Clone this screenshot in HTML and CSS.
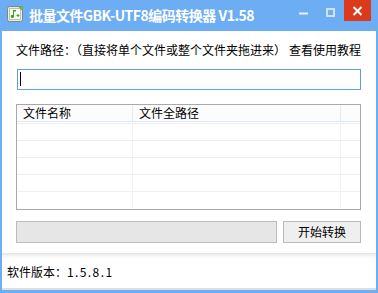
FILE: index.html
```html
<!DOCTYPE html>
<html lang="zh-CN">
<head>
<meta charset="utf-8">
<title>批量文件GBK-UTF8编码转换器 V1.58</title>
<link rel="stylesheet" href="styles.css">
</head>
<body>
<div class="window">
  <div class="titlebar">
    <svg class="app-icon" width="16" height="16" viewBox="0 0 16 16">
      <rect x="0.5" y="0.5" width="15" height="15" rx="2" fill="#e9ece6" stroke="#7d8a78"/>
      <rect x="2.5" y="2.5" width="11" height="11" fill="#f7f9f4" stroke="#b9c2b3"/>
      <path d="M7 4v6.5a1.6 1.6 0 1 1-1-1.5V4h3v1.5H7" fill="#4a9a2a"/>
      <path d="M9.5 9.5h3M11 8v3" stroke="#5aa83a" stroke-width="1.2"/>
      <path d="M12 0.5l3.5 3.5M13.5 0.5h2v2" stroke="#5fb241" stroke-width="1.3" fill="none"/>
    </svg>
    <span class="title">批量文件GBK-UTF8编码转换器 V1.58</span>
    <div class="controls">
      <svg class="ctl-min" width="9" height="21" viewBox="0 0 9 21"><rect x="0" y="12.5" width="9" height="2" fill="#e8f1fc"/></svg>
      <svg class="ctl-max" width="9" height="21" viewBox="0 0 9 21"><rect x="1" y="9" width="7" height="7" fill="none" stroke="#cfe2fa" stroke-width="2"/></svg>
      <svg class="ctl-close" width="27" height="21" viewBox="0 0 27 21"><rect width="27" height="21" fill="#db3a1b"/><path d="M9.5 7l8 8M17.5 7l-8 8" stroke="#ffffff" stroke-width="2"/></svg>
    </div>
  </div>
  <div class="client">
    <div class="main">
      <div class="label-row">
        <span>文件路径：（直接将单个文件或整个文件夹拖进来）</span>
        <span>查看使用教程</span>
      </div>
      <div class="path-input"><span class="caret"></span></div>
      <div class="table">
        <div class="thead">
          <div class="cell c1">文件名称</div>
          <div class="cell c2">文件全路径</div>
          <div class="cell c3"></div>
        </div>
        <div class="tbody">
          <div class="row"><div class="cell c1"></div><div class="cell c2"></div><div class="cell c3"></div></div>
          <div class="row"><div class="cell c1"></div><div class="cell c2"></div><div class="cell c3"></div></div>
          <div class="row"><div class="cell c1"></div><div class="cell c2"></div><div class="cell c3"></div></div>
          <div class="row"><div class="cell c1"></div><div class="cell c2"></div><div class="cell c3"></div></div>
          <div class="row"><div class="cell c1"></div><div class="cell c2"></div><div class="cell c3"></div></div>
        </div>
      </div>
      <div class="action-row">
        <div class="progress"></div>
        <button class="btn">开始转换</button>
      </div>
    </div>
    <div class="status">软件版本：<span class="ver">1.5.8.1</span></div>
  </div>
</div>
</body>
</html>
```

FILE: styles.css
```css
* { box-sizing: border-box; }
html, body { margin: 0; padding: 0; }
body {
  width: 378px;
  height: 293px;
  overflow: hidden;
  font-family: "Noto Sans CJK SC", "Noto Sans", sans-serif;
  font-size: 12px;
  color: #000;
}
.window {
  width: 378px;
  height: 293px;
  background: #6cadf3;
  display: flex;
  flex-direction: column;
}
.titlebar {
  height: 31px;
  flex: 0 0 31px;
  display: flex;
  align-items: flex-start;
}
.app-icon {
  margin: 6px 0 0 7px;
  flex: 0 0 16px;
}
.title {
  margin: 5px 0 0 6px;
  color: #fff;
  font-weight: bold;
  font-size: 14px;
  line-height: 20px;
  letter-spacing: -0.5px;
  white-space: nowrap;
}
.controls {
  margin-left: auto;
  margin-right: 7px;
  display: flex;
  align-items: flex-start;
}
.ctl-max { margin-left: 18px; }
.ctl-close { margin-left: 9px; }
.client {
  flex: 1;
  margin: 0 2px 3px 2px;
  background: #fff;
  display: flex;
  flex-direction: column;
}
.main {
  flex: 1;
  padding: 11px 15px 0 14px;
  display: flex;
  flex-direction: column;
}
.label-row {
  display: flex;
  justify-content: space-between;
  line-height: 16px;
  height: 16px;
  white-space: nowrap;
}
.path-input {
  margin: 11px 0 0 1px;
  height: 21px;
  border: 1px solid #5f9fe4;
  padding: 2px 0 0 2px;
}
.caret {
  display: block;
  width: 1px;
  height: 14px;
  background: #000;
}
.table {
  margin-top: 14px;
  height: 106px;
  border: 1px solid #a9a9a9;
  display: flex;
  flex-direction: column;
}
.thead {
  display: grid;
  grid-template-columns: 116px 208px 1fr;
  height: 17px;
  background: #fcfcfd;
  border-bottom: 1px solid #dbe9f9;
}
.thead .cell {
  line-height: 16px;
  padding-left: 6px;
  white-space: nowrap;
}
.thead .c1, .thead .c2 { border-right: 1px solid #e1ecf9; }
.tbody {
  padding-top: 1px;
}
.row {
  display: grid;
  grid-template-columns: 116px 208px 1fr;
  height: 17px;
  border-top: 1px solid #eeeeee;
}
.row .c1, .row .c2 { border-right: 1px solid #f0f0f0; }
.action-row {
  margin-top: 11px;
  display: flex;
  gap: 6px;
  height: 22px;
}
.progress {
  width: 261px;
  height: 22px;
  background: #e6e6e6;
  border: 1px solid #bcbcbc;
}
.btn {
  width: 78px;
  height: 22px;
  margin: 0;
  padding: 0;
  background: #efefef;
  border: 1px solid #bababa;
  font-family: "Noto Sans CJK SC", "Noto Sans", sans-serif;
  font-size: 12px;
  color: #000;
  line-height: 20px;
}
.status {
  flex: 0 0 37px;
  height: 37px;
  background: linear-gradient(#e4e4e4, #f6f6f6 3px, #ffffff 6px);
  border-bottom: 2px solid #dedede;
  padding: 11px 0 0 5px;
  line-height: 16px;
  white-space: nowrap;
}
.ver { letter-spacing: 1.4px; }
```
